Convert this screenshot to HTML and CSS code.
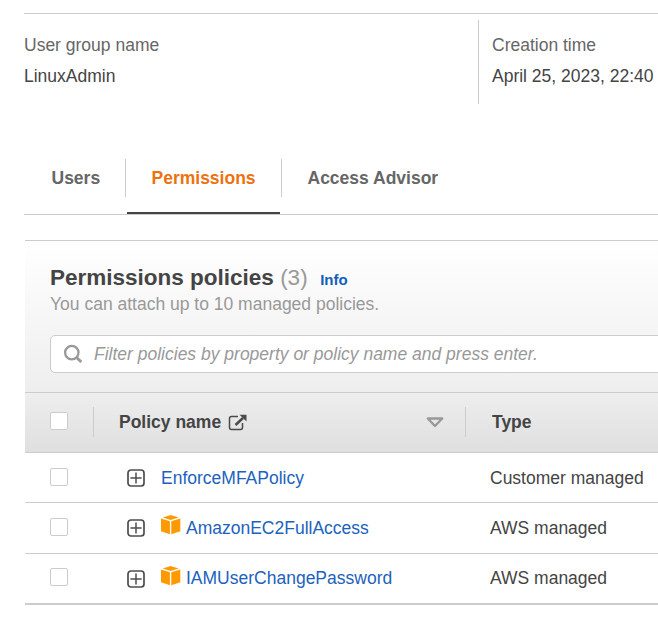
FILE: index.html
```html
<!DOCTYPE html>
<html lang="en">
<head>
<meta charset="utf-8">
<title>LinuxAdmin - User group</title>
<link rel="stylesheet" href="styles.css">
</head>
<body>
<svg class="defs" width="0" height="0" aria-hidden="true">
  <symbol id="expand" viewBox="0 0 18 18">
    <rect x="1" y="1" width="16" height="16" rx="3" fill="none" stroke="#4d4d4d" stroke-width="1.7"/>
    <path d="M9 3.4v11.2M3.4 9h11.2" stroke="#4d4d4d" stroke-width="1.5"/>
  </symbol>
  <symbol id="cube" viewBox="0 0 20 20">
    <path d="M1.8 2.6 9.700 0l7.900 2.600-7.900 2.400zM0 3.500l8.900 2.700v13L0 16.200zM10.300 6.200 19.300 3.500v12.700l-9 3z" fill="#ff9900"/>
  </symbol>
</svg>

<section class="summary">
  <div class="field">
    <div class="label">User group name</div>
    <div>LinuxAdmin</div>
  </div>
  <div class="field field-created">
    <div class="label">Creation time</div>
    <div>April 25, 2023, 22:40</div>
  </div>
</section>

<nav class="tabs">
  <a class="tab tab-users">Users</a>
  <a class="tab tab-active">Permissions</a>
  <a class="tab tab-advisor">Access Advisor</a>
</nav>

<section class="panel">
  <header class="panel-head">
    <h2><span>Permissions policies</span> <span class="count">(3)</span><a class="info">Info</a></h2>
    <p>You can attach up to 10 managed policies.</p>
    <div class="search">
      <svg width="20" height="20" viewBox="0 0 20 20" fill="none" stroke="#999">
        <circle cx="8.8" cy="8.600" r="6.700" stroke-width="2.300"/>
        <path d="M13.300 13.300l5 4.700" stroke-width="2.900"/>
      </svg>
      <span>Filter policies by property or policy name and press enter.</span>
    </div>
  </header>
  <div class="row row-head">
    <span class="check"></span>
    <div class="name-head">
      <span>Policy name</span>
      <svg class="external" width="19" height="17" viewBox="0 0 19 17" fill="none" stroke="#4a4a4a">
        <path d="M10 2.500H3.500Q1.500 2.500 1.500 4.500v9q0 2 2 2h9q2 0 2-2V9" stroke-width="1.500"/>
        <path d="M7.500 11 15 4" stroke-width="2.500"/>
        <path d="M11.500 .8h7v6.700z" fill="#4a4a4a" stroke="none"/>
      </svg>
      <svg class="sort" width="18" height="11" viewBox="0 0 18 11">
        <path d="M1.800 1.500h14.400L9 9z" fill="none" stroke="#999" stroke-width="2.300" stroke-linejoin="round"/>
      </svg>
    </div>
    <div class="type-head">Type</div>
  </div>
  <div class="row row-first">
    <span class="check"></span>
    <div class="name"><svg class="expand"><use href="#expand"/></svg><a>EnforceMFAPolicy</a></div>
    <div>Customer managed</div>
  </div>
  <div class="row row-managed">
    <span class="check"></span>
    <div class="name"><svg class="expand"><use href="#expand"/></svg><svg class="cube"><use href="#cube"/></svg><a>AmazonEC2FullAccess</a></div>
    <div>AWS managed</div>
  </div>
  <div class="row row-last">
    <span class="check"></span>
    <div class="name"><svg class="expand"><use href="#expand"/></svg><svg class="cube"><use href="#cube"/></svg><a>IAMUserChangePassword</a></div>
    <div>AWS managed</div>
  </div>
</section>
</body>
</html>
```

FILE: styles.css
```css
* {
  box-sizing: border-box;
}

body {
  margin: 0;
  padding: 13px 0 0 24px;
  height: 625px;
  overflow: hidden;
  background: #fff;
  color: #444;
  font: 17.5px/31px "Liberation Sans", Arial, sans-serif;
  white-space: nowrap;
}

.defs {
  display: block;
}

.summary {
  display: flex;
  height: 91px;
  padding-top: 6px;
  border-top: 1px solid #ccc;
}

.field {
  width: 454px;
  padding-top: 10px;
}

.field-created {
  width: 180px;
  padding-left: 13px;
  border-left: 1px solid #ccc;
}

.label {
  color: #666;
}

.tabs {
  display: flex;
  height: 56px;
  margin-top: 55px;
  border-bottom: 1px solid #ccc;
  color: #666;
  font-weight: bold;
  line-height: 38px;
}

.tab {
  height: 38px;
}

.tab-users {
  width: 102px;
  padding-left: 27.5px;
  border-right: 1px solid #ccc;
}

.tab-active {
  width: 153px;
  height: 55px;
  margin: 0 1px;
  padding-left: 24.5px;
  border-bottom: 2px solid #444;
  color: #ec7211;
}

.tab-advisor {
  padding-left: 25.5px;
  border-left: 1px solid #ccc;
}

.panel {
  margin: 25px 0 0 1px;
  border-top: 1px solid #ccc;
}

.panel-head {
  height: 151px;
  padding: 23px 0 0 25px;
  background: linear-gradient(#fff, #eee);
  color: #999;
}

h2 {
  margin: 0;
  color: #444;
  font-size: 22.5px;
  line-height: 27px;
}

.count {
  color: #999;
  font-weight: normal;
}

.info {
  margin-left: 12.5px;
  color: #0e5fbb;
  font-size: 15px;
}

p {
  margin: -2px 0 0;
  line-height: 26px;
}

.search {
  display: flex;
  align-items: center;
  gap: 11px;
  height: 38px;
  margin: 18px -5px 0 0;
  padding-left: 12px;
  border: 1px solid #ccc;
  border-radius: 5px;
  background: #fff;
  font-style: italic;
}

.row {
  display: grid;
  grid-template-columns: 43px 397px 1fr;
  align-items: center;
  height: 50px;
  padding-left: 25px;
  border-bottom: 1px solid #ccc;
}

.row-head {
  height: 61px;
  padding-bottom: 1px;
  border-top: 1px solid #ccc;
  background: linear-gradient(#eee, #dfdfdf);
  font-weight: bold;
}

.row-first {
  padding-top: 1px;
}

.row-managed {
  height: 51px;
}

.row-last {
  height: 51px;
  border-bottom-width: 2px;
}

.check {
  width: 18px;
  height: 18px;
  margin-top: -3px;
  border: 1px solid #ccc;
  border-radius: 2px;
  background: #fff;
}

.name-head {
  display: flex;
  align-items: center;
  width: 373px;
  height: 30px;
  padding: 0 21px 0 25px;
  border: solid #ccc;
  border-width: 0 1px;
}

.external {
  margin-left: 7px;
}

.sort {
  margin-left: auto;
}

.type-head {
  padding-left: 2px;
}

.name {
  display: flex;
  align-items: center;
  padding-left: 34px;
  color: #1c62bd;
}

.expand {
  width: 18px;
  height: 18px;
  margin-right: 16px;
}

.cube {
  width: 20px;
  height: 20px;
  margin: -6px 5px 0 0;
}
```
